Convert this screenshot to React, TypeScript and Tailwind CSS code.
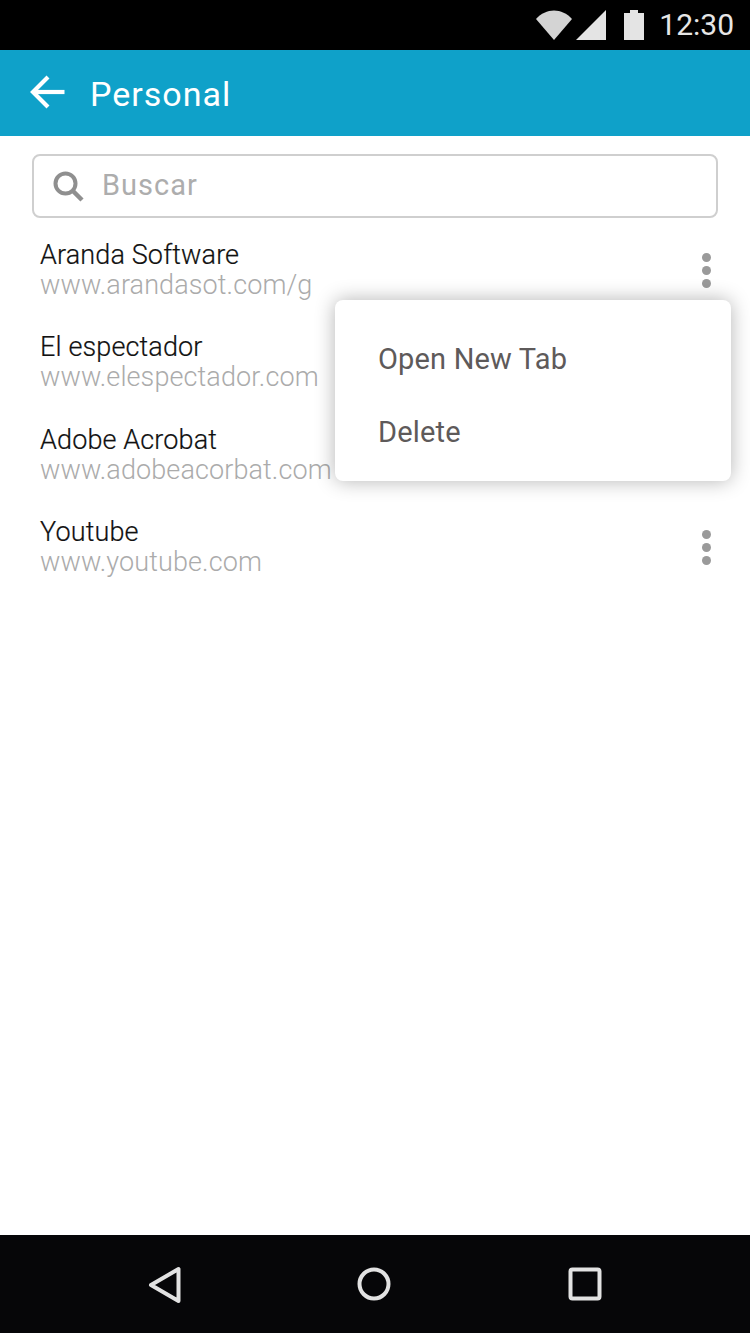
const rows = [
  { t: "Aranda Software", u: "www.arandasot.com/g", dots: true },
  { t: "El espectador", u: "www.elespectador.com", dots: false },
  { t: "Adobe Acrobat", u: "www.adobeacorbat.com", dots: false },
  { t: "Youtube", u: "www.youtube.com", dots: true },
];

function Dots() {
  return (
    <div className="flex flex-col gap-[4px] w-[9px]">
      <div className="w-[9px] h-[9px] rounded-full bg-[#9a9a9a]" />
      <div className="w-[9px] h-[9px] rounded-full bg-[#9a9a9a]" />
      <div className="w-[9px] h-[9px] rounded-full bg-[#9a9a9a]" />
    </div>
  );
}

export default function App() {
  return (
    <div className="relative w-[750px] h-[1333px] bg-white flex flex-col overflow-hidden font-['Roboto',sans-serif]">
      <div className="h-[50px] bg-black flex items-center justify-end shrink-0 pr-[16px]">
        <svg width="36" height="30" viewBox="0 0 36 30" className="mr-[4px]">
          <path d="M0 9 C10 -2.5 26 -2.5 36 9 L18 30 Z" fill="#d4d4d4" />
        </svg>
        <svg width="30" height="30" viewBox="0 0 30 30" className="mr-[18px]">
          <path d="M0 30 L30 0 V30 Z" fill="#e4e4e4" />
        </svg>
        <svg width="20" height="30" viewBox="0 0 20 30" className="mr-[15px]">
          <path d="M0 3 H6 V0 H14 V3 H20 V30 H0 Z" fill="#e4e4e4" />
        </svg>
        <span className="text-[30px] leading-[36px] text-[#e6e6e6]">12:30</span>
      </div>
      <div className="h-[86px] bg-[#0fa1c9] flex items-center shrink-0 pl-[30px]">
        <svg width="35" height="34" viewBox="0 0 35 34" fill="none" stroke="#ffffff" strokeWidth="4.2" className="mt-[-2px]">
          <path d="M34.5 17 H3" />
          <path d="M18 2 L3 17 L18 32" />
        </svg>
        <span className="ml-[25px] mt-[2px] text-[34px] leading-[40px] text-white tracking-[1px]">Personal</span>
      </div>
      <div className="flex-1 pt-[18px]">
        <div className="mx-[32px] h-[64px] border-2 border-[#cfcfcf] rounded-[8px] flex items-center pl-[18px]">
          <svg width="32" height="32" viewBox="0 0 32 32" fill="none" stroke="#8f8f8f">
            <circle cx="13.5" cy="13.5" r="10" strokeWidth="4" />
            <path d="M20.5 20.5 L30 30" strokeWidth="4.5" />
          </svg>
          <span className="ml-[18px] mt-[-2px] text-[29px] leading-[34px] text-[#adadad] tracking-[1px]">Buscar</span>
        </div>
        <div className="mt-[20px] flex flex-col">
          {rows.map((r) => (
            <div key={r.t} className="h-[92.4px] pl-[40px] pr-[39.5px] flex justify-between">
              <div className="pt-[2px]">
                <div className="text-[27px] leading-[30px] text-[#111111] font-light tracking-[0.13px] [-webkit-text-stroke:0.2px_#111111]">{r.t}</div>
                <div className="text-[27px] leading-[30px] text-[#ababab] font-light tracking-[0.1px]">{r.u}</div>
              </div>
              {r.dots && <div className="mt-[15px]"><Dots /></div>}
            </div>
          ))}
        </div>
      </div>
      <div className="h-[98px] bg-[#060608] flex items-center shrink-0 relative">
        <svg width="34" height="38" viewBox="0 0 34 38" fill="none" stroke="#e2e2e2" strokeWidth="4" strokeLinejoin="round" className="ml-[148px] mt-[1px]">
          <path d="M30.5 3 V35 L3 19 Z" />
        </svg>
        <svg width="34" height="34" viewBox="0 0 34 34" fill="none" stroke="#e2e2e2" strokeWidth="4" className="ml-[175px]">
          <circle cx="17" cy="17" r="14.5" />
        </svg>
        <svg width="34" height="34" viewBox="0 0 34 34" fill="none" stroke="#e2e2e2" strokeWidth="4" strokeLinejoin="round" className="ml-[177px]">
          <rect x="2.5" y="2.5" width="29" height="29" rx="2" />
        </svg>
      </div>
      <div className="absolute left-[335px] top-[300px] w-[396px] h-[181px] bg-white rounded-[8px] shadow-[0_0_20px_rgba(0,0,0,0.3)] pl-[43px] pt-[41px]">
        <div className="text-[29px] leading-[36px] text-[#5e5a5a] tracking-[0.17px]">Open New Tab</div>
        <div className="mt-[37px] text-[29px] leading-[36px] text-[#5e5a5a] tracking-[0.17px]">Delete</div>
      </div>
    </div>
  );
}
